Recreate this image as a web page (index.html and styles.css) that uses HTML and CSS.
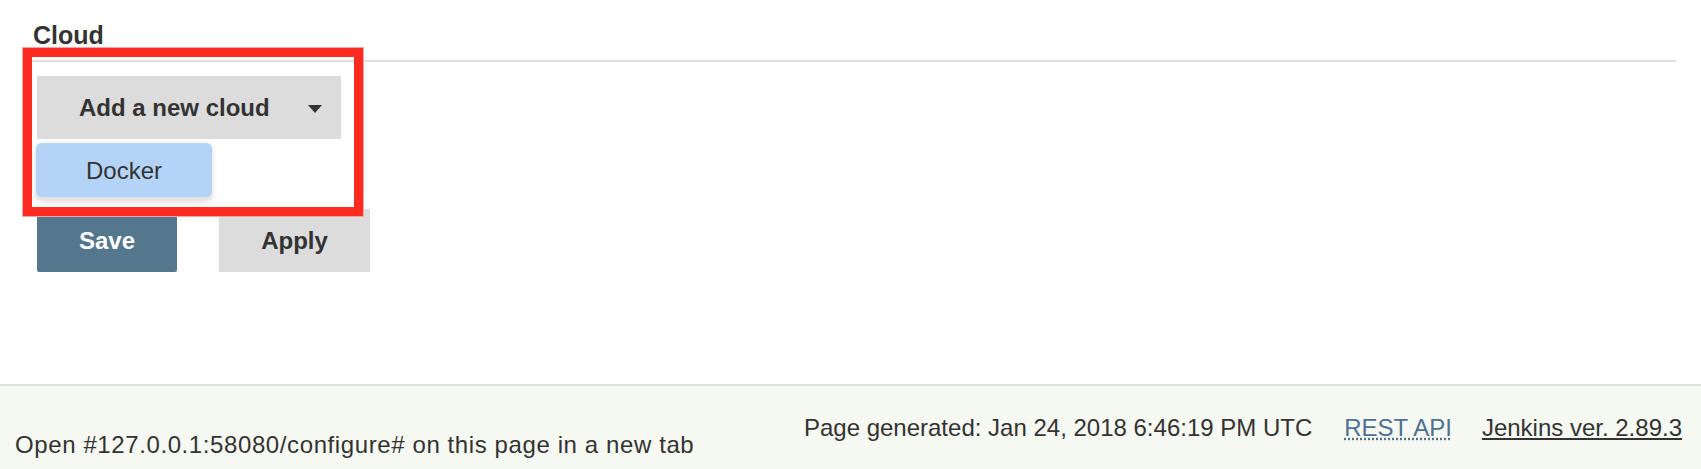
FILE: index.html
```html
<!DOCTYPE html>
<html>
<head>
<meta charset="utf-8">
<link rel="stylesheet" href="styles.css">
</head>
<body>
<div class="page">
  <main class="main">
    <div class="section-header">Cloud</div>
    <div class="cloud-area">
      <button class="add-btn"><span>Add a new cloud</span><span class="caret"></span></button>
      <div class="menu">
        <div class="menu-item">Docker</div>
      </div>
      <div class="highlight"></div>
    </div>
    <div class="actions">
      <button class="btn btn-primary">Save</button>
      <button class="btn btn-secondary">Apply</button>
    </div>
  </main>
  <footer class="footer">
    <span class="gen">Page generated: Jan 24, 2018 6:46:19 PM UTC</span>
    <a class="rest" href="#">REST API</a>
    <a class="ver" href="#">Jenkins ver. 2.89.3</a>
  </footer>
  <div class="status">Open #127.0.0.1:58080/configure# on this page in a new tab</div>
</div>
</body>
</html>
```

FILE: styles.css
```css
html, body {
  margin: 0;
  padding: 0;
  height: 100%;
  overflow: hidden;
}
body {
  font-family: "Liberation Sans", Arial, sans-serif;
  color: #333;
  background: #fff;
}
.page {
  position: relative;
  display: flex;
  flex-direction: column;
  height: 100vh;
}
.main {
  flex: 1;
  padding: 0 25px 0 30px;
}
.section-header {
  font-size: 25px;
  font-weight: bold;
  line-height: 30px;
  padding: 20px 0 10px 3px;
  border-bottom: 2px solid #dddddd;
}
.cloud-area {
  position: relative;
  margin-top: 14px;
  padding-left: 7px;
}
.add-btn {
  display: flex;
  align-items: center;
  width: 304px;
  height: 63px;
  padding: 0 19px 0 42px;
  border: none;
  background: #dcdcdc;
  font-family: inherit;
  font-size: 24px;
  font-weight: bold;
  color: #333;
  box-sizing: border-box;
}
.caret {
  margin-left: auto;
  width: 0;
  height: 0;
  border-left: 7.5px solid transparent;
  border-right: 7.5px solid transparent;
  border-top: 8px solid #333;
  margin-top: 2px;
}
.menu {
  position: absolute;
  left: 6px;
  top: 67px;
  width: 176px;
  padding: 0 0 3px 0;
  background: #e4e4e4;
  border-radius: 6px;
  box-shadow: 0 2px 6px rgba(0,0,0,0.15);
  z-index: 2;
}
.menu-item {
  height: 54px;
  line-height: 56px;
  text-align: center;
  font-size: 24px;
  background: #b3d4f7;
  border-radius: 6px;
  color: #333;
}
.highlight {
  position: absolute;
  left: -7px;
  top: -28px;
  width: 340px;
  height: 168px;
  border: 9px solid #fd2b1f;
  box-sizing: border-box;
  outline: 1px solid #e9a8a0;
  z-index: 3;
}
.actions {
  display: flex;
  gap: 42px;
  margin-top: 70px;
  padding-left: 7px;
}
.btn {
  height: 63px;
  border: none;
  font-family: inherit;
  font-size: 24px;
  font-weight: bold;
  padding: 0;
}
.btn-primary {
  width: 140px;
  background: #54778e;
  color: #fff;
  border-radius: 2px;
}
.btn-secondary {
  width: 151px;
  background: #dcdcdc;
  color: #333;
}
.footer {
  height: 85px;
  box-sizing: border-box;
  border-top: 2px solid #dddddd;
  background: #f6f8f2;
  display: flex;
  justify-content: flex-end;
  align-items: flex-start;
  padding: 28px 19px 0 0;
  font-size: 24px;
  line-height: 28px;
}
.gen {
  margin-right: 32px;
}
.rest {
  color: #4d7191;
  text-decoration: underline dotted;
  margin-right: 30px;
}
.ver {
  color: #333;
  text-decoration: underline;
}
.status {
  position: absolute;
  left: 0;
  bottom: 0;
  padding: 0 10px 10px 15px;
  font-size: 24px;
  letter-spacing: 0.6px;
  line-height: 28px;
  color: #333;
  background: #f6f8f2;
}
```
